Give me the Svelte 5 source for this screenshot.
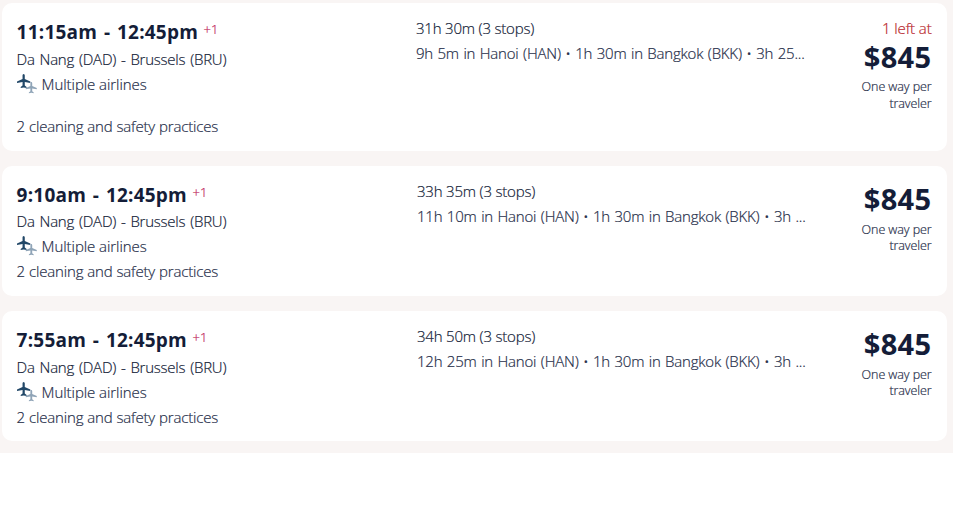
<script>
  const flights = [
    { time: '11:15am - 12:45pm', duration: '31h 30m (3 stops)', layovers: '9h 5m in Hanoi (HAN) • 1h 30m in Bangkok (BKK) • 3h 25...', left: '1 left at' },
    { time: '9:10am - 12:45pm', duration: '33h 35m (3 stops)', layovers: '11h 10m in Hanoi (HAN) • 1h 30m in Bangkok (BKK) • 3h ...', compact: true },
    { time: '7:55am - 12:45pm', duration: '34h 50m (3 stops)', layovers: '12h 25m in Hanoi (HAN) • 1h 30m in Bangkok (BKK) • 3h ...' }
  ];
</script>

{#snippet plane()}
  <path d="M9 0C8.1 0 7.5 1 7.5 2V6.6L0 10V11.8L7.5 10.6V15.2L5 17V18.4L9 17.6L13 18.4V17L10.5 15.2V10.6L18 11.8V10L10.5 6.6V2C10.5 1 9.9 0 9 0Z" />
{/snippet}

<main>
  {#each flights as flight}
    <article class:limited={flight.left} class:compact={flight.compact}>
      <section class="journey">
        <h2><span class="time">{flight.time}</span><sup>+1</sup></h2>
        <p class="route">Da Nang (DAD) - Brussels (BRU)</p>
        <p class="airline">
          <svg width="20" height="20" viewBox="0 0 20 20" aria-hidden="true">
            <g fill="#214767" transform="scale(.74 .76)">{@render plane()}</g>
            <g fill="#8fa4b7" transform="translate(8.8 7.9) scale(.61 .62)">{@render plane()}</g>
          </svg>
          <span>Multiple airlines</span>
        </p>
        <p class="safety">2 cleaning and safety practices</p>
      </section>
      <section class="stops">
        <p class="duration">{flight.duration}</p>
        <p class="layovers">{flight.layovers}</p>
      </section>
      <section class="price">
        {#if flight.left}<p class="left">{flight.left}</p>{/if}
        <strong>{'$845'}</strong>
        <p class="terms"><span>One way per</span><span>traveler</span></p>
      </section>
    </article>
  {/each}
</main>

<style>
  :global(body) { background: #fff; }
  main {
    box-sizing: border-box;
    display: flex;
    flex-direction: column;
    gap: 15px;
    height: 453px;
    padding: 3px 6px 12px 2px;
    background: #f9f5f4;
    color: #262e49;
    font: 15px/25px "Open Sans", "Noto Sans", sans-serif;
    font-weight: 300;
    -webkit-text-stroke: 0.2px;
  }
  article {
    box-sizing: border-box;
    display: flex;
    height: 130px;
    padding: 13px 16px 0 14.6px;
    border-radius: 10px;
    background: #fff;
  }
  article.limited { height: 148px; }
  h2, p { margin: 0; white-space: nowrap; }
  .journey { width: 400.4px; }
  h2 { display: flex; height: 31px; font-size: 19px; line-height: 32px; color: #141d38; font-weight: 700; }
  .compact h2 { height: 30px; }
  .time { letter-spacing: 0.22px; word-spacing: 1.6px; -webkit-text-stroke: 0; }
  sup { margin-left: 5.5px; font-size: 13px; line-height: 27px; font-weight: 300; color: #c12a5c; }
  .route { color: #141d38; letter-spacing: -0.23px; word-spacing: 1.2px; }
  .airline { display: flex; gap: 5px; letter-spacing: -0.06px; }
  .airline svg { margin-top: 2px; }
  .safety { letter-spacing: -0.17px; word-spacing: 0.3px; }
  .limited .safety { margin-top: 17px; }
  .stops { flex: 1; letter-spacing: -0.2px; word-spacing: 0.8px; }
  .limited .stops { margin-left: -1px; }
  .duration { color: #141d38; word-spacing: 0; }
  .price { text-align: right; margin-right: -0.6px; }
  strong { display: block; font-size: 29px; line-height: 40px; height: 43px; letter-spacing: 0.4px; color: #141d38; font-weight: 700; -webkit-text-stroke: 0; }
  .left { height: 21px; color: #b8262b; letter-spacing: -0.1px; }
  .limited strong { height: 41px; }
  .terms { display: flex; flex-direction: column; font-size: 12.5px; line-height: 16px; letter-spacing: -0.08px; }
  .limited .terms { line-height: 17px; }
</style>
